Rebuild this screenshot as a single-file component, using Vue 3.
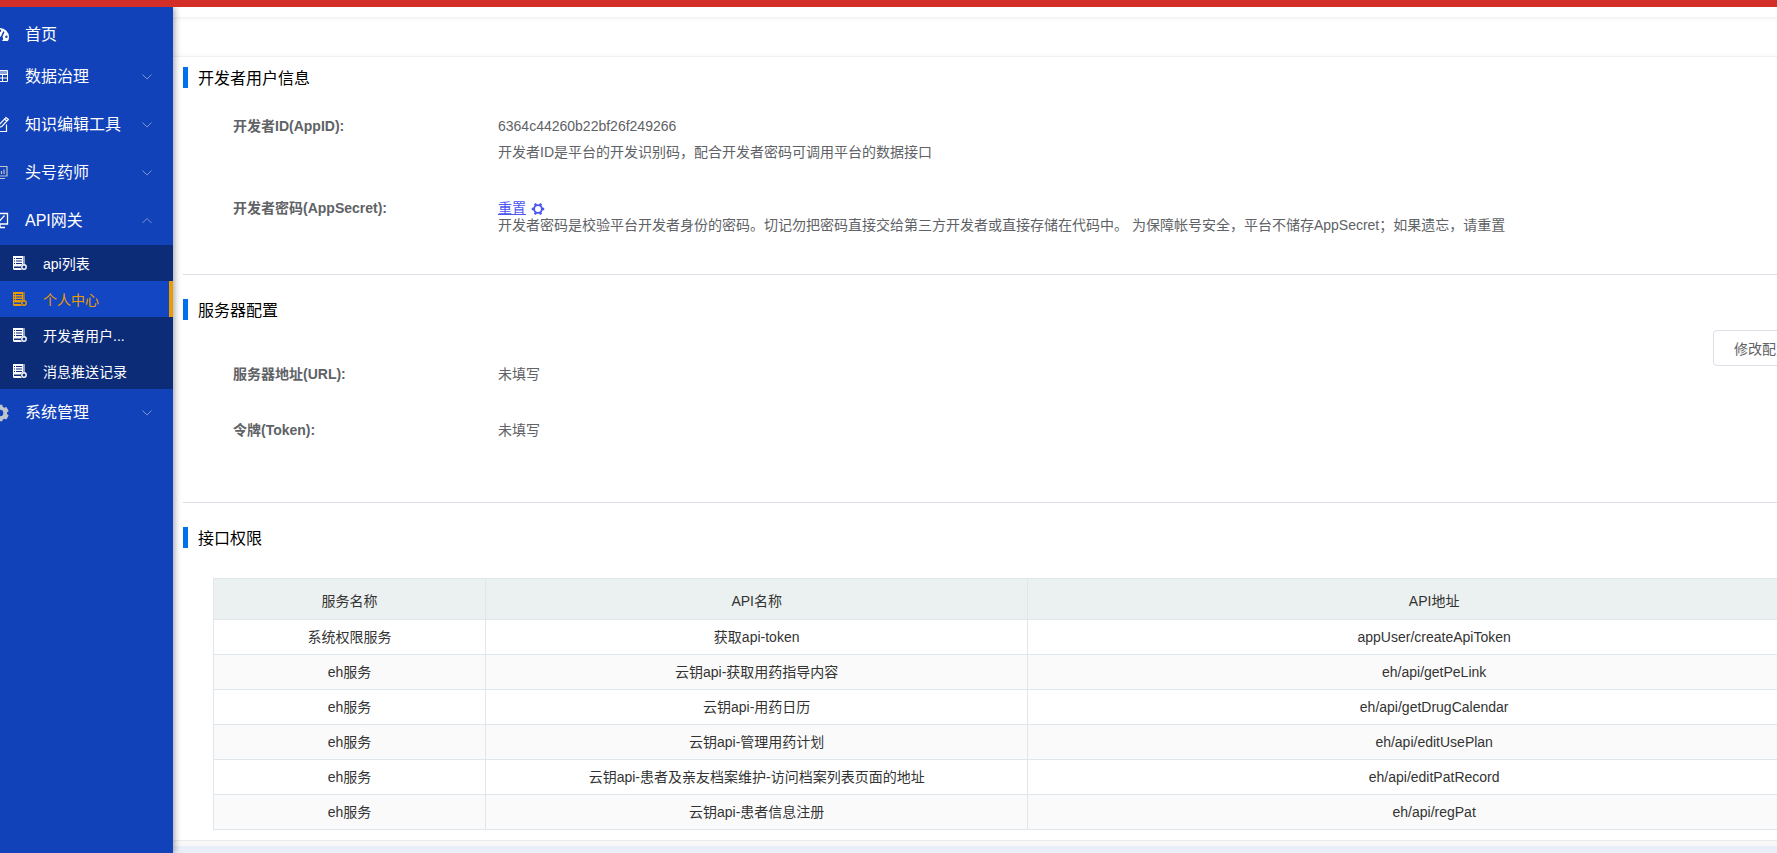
<script setup>
import { ref } from 'vue'

const topItems = [
  { label: '数据治理', icon: 'grid' },
  { label: '知识编辑工具', icon: 'edit' },
  { label: '头号药师', icon: 'board', dim: true }
]
const subItems = ['api列表', '个人中心', '开发者用户...', '消息推送记录']
const active = ref('个人中心')

const rows = [
  ['系统权限服务', '获取api-token', 'appUser/createApiToken'],
  ['eh服务', '云钥api-获取用药指导内容', 'eh/api/getPeLink'],
  ['eh服务', '云钥api-用药日历', 'eh/api/getDrugCalendar'],
  ['eh服务', '云钥api-管理用药计划', 'eh/api/editUsePlan'],
  ['eh服务', '云钥api-患者及亲友档案维护-访问档案列表页面的地址', 'eh/api/editPatRecord'],
  ['eh服务', '云钥api-患者信息注册', 'eh/api/regPat']
]
</script>

<template>
  <div class="page">
    <header class="topbar"></header>
    <div class="shell">
      <nav class="sidebar">
        <a href="#" class="item home">
          <svg class="icon" viewBox="0 0 18 18">
            <path fill="currentColor" fill-rule="evenodd" d="M9 2a9 9 0 0 0-9 9c0 1.800.5 3 1.200 4h15.600c.7-1 1.200-2.200 1.200-4A9 9 0 0 0 9 2zM9 3.500a1.200 1.200 0 1 1 0 2.400 1.200 1.200 0 0 1 0-2.400zM3.800 6a1.200 1.200 0 1 1 0 2.400 1.200 1.200 0 0 1 0-2.400zM2.600 10.500a1.200 1.200 0 1 1 0 2.400 1.200 1.200 0 0 1 0-2.400zM12.200 5.300l1.300.6-2.100 5.200a2.300 2.300 0 1 1-1.500-.6zM15.400 9.500a1.200 1.200 0 1 1 0 2.400 1.200 1.200 0 0 1 0-2.400z" />
          </svg>
          <span>首页</span>
        </a>
        <button v-for="it in topItems" :key="it.label" type="button" class="item">
          <svg class="icon" :class="{ dim: it.dim }" viewBox="0 0 18 18" fill="none" stroke="currentColor">
            <g v-if="it.icon === 'grid'">
              <path d="M1.500 2.500h15v11h-15zM1.500 6.500h15M1.500 10h15M6.500 6v7.500M11.500 6v7.500" />
              <path fill="currentColor" fill-opacity=".5" stroke="none" d="M2 3h14v3H2z" />
            </g>
            <path v-else-if="it.icon === 'edit'" stroke-width="1.200" d="M9 3H1.500v12.500h14V8.500M8.500 8.500l6.500-7 2.300 2-6.500 7-2.800.8zM13.500 3l2.300 2" />
            <path v-else stroke-width="1.200" d="M1.500 2.500h14.500v9.500H1.500zM5 6.500v3.500M8 5v5M10.500 7v3M13 5.500V10M5 14.500h9" />
          </svg>
          <span>{{ it.label }}</span>
          <svg class="arrow" viewBox="0 0 12 12"><path d="M1.500 3.500 6 8l4.500-4.500" /></svg>
        </button>
        <button type="button" class="item" aria-expanded="true">
          <svg class="icon" viewBox="0 0 18 18" fill="none" stroke="currentColor" stroke-width="1.300">
            <path d="M1.500 1.500h15V12h-15zM9 12v3.500M4 15.500h10M6 6.500 8.500 9l5-5.500" />
          </svg>
          <span>API网关</span>
          <svg class="arrow" viewBox="0 0 12 12"><path d="M1.500 8 6 3.500 10.500 8" /></svg>
        </button>
        <div class="submenu">
          <a
            v-for="s in subItems"
            :key="s"
            href="#"
            class="sub"
            :class="{ active: s === active }"
            @click.prevent="active = s"
          >
            <svg class="sub-icon" viewBox="0 0 14 14">
              <path fill="currentColor" opacity=".55" d="M10 0h1.500q.5 0 .5.500V8h-2z" />
              <path fill="currentColor" fill-rule="evenodd" d="M0 0h10v8a3.500 3.500 0 0 0-2.500 2.500H1V12h6.500q.5 1 1.500 2H1.500Q0 14 0 12.500zM3 2v1h6V2zM3 4.500v1h6v-1zM3 7v1h6V7zM1 2v1h1V2zM1 4.500v1h1v-1zM1 7v1h1V7z" />
              <circle cx="11" cy="11" r="2.200" fill="none" stroke="currentColor" stroke-width="1.400" />
            </svg>
            <span>{{ s }}</span>
          </a>
        </div>
        <button type="button" class="item">
          <svg class="icon dim" viewBox="0 0 18 18">
            <path fill="currentColor" fill-rule="evenodd" d="M6.800.7h4.400l.7 2.300 1.200.7 2.300-.6 2.300 3.800L16 8.500V10l1.700 1.600-2.300 3.800-2.300-.6-1.200.7-.7 1.700H6.800l-.7-1.700-1.200-.7-2.300.6L.3 11.600 2 10V8.500L.3 6.900l2.300-3.800 2.300.6L6.100 3zM9 5.700a3.300 3.300 0 1 0 0 6.600 3.300 3.300 0 0 0 0-6.600z" />
          </svg>
          <span>系统管理</span>
          <svg class="arrow" viewBox="0 0 12 12"><path d="M1.500 3.500 6 8l4.500-4.500" /></svg>
        </button>
      </nav>

      <main class="main">
        <div class="tabs"></div>
        <div class="card">
          <section class="section">
            <h2 class="title">开发者用户信息</h2>
            <dl class="info first">
              <dt>开发者ID(AppID):</dt>
              <dd>
                <p>6364c44260b22bf26f249266</p>
                <p>开发者ID是平台的开发识别码，配合开发者密码可调用平台的数据接口</p>
              </dd>
            </dl>
            <dl class="info secret">
              <dt>开发者密码(AppSecret):</dt>
              <dd>
                <a href="#" class="reset">
                  <span>重置</span>
                  <svg viewBox="0 0 14 14">
                    <circle cx="7" cy="7" r="3.900" fill="none" stroke="currentColor" stroke-width="1.900" />
                    <path fill="none" stroke="currentColor" stroke-width="2.400" d="M11 7h2.200M9 10.500l1.100 1.900M5 10.500l-1.100 1.900M3 7H.8M5 3.500 3.900 1.600M9 3.500l1.100-1.900" />
                  </svg>
                </a>
                <p>开发者密码是校验平台开发者身份的密码。切记勿把密码直接交给第三方开发者或直接存储在代码中。 为保障帐号安全，平台不储存AppSecret；如果遗忘，请重置</p>
              </dd>
            </dl>
          </section>

          <section class="section">
            <h2 class="title">服务器配置</h2>
            <div class="config">
              <div class="fields">
                <dl class="info">
                  <dt>服务器地址(URL):</dt>
                  <dd>未填写</dd>
                </dl>
                <dl class="info">
                  <dt>令牌(Token):</dt>
                  <dd>未填写</dd>
                </dl>
              </div>
              <button type="button" class="btn">修改配置</button>
            </div>
          </section>

          <section class="section">
            <h2 class="title">接口权限</h2>
            <div class="table-wrap">
              <table>
                <colgroup><col class="c1" /><col class="c2" /><col /></colgroup>
                <thead>
                  <tr><th>服务名称</th><th>API名称</th><th>API地址</th></tr>
                </thead>
                <tbody>
                  <tr v-for="(r, i) in rows" :key="i">
                    <td v-for="c in r" :key="c">{{ c }}</td>
                  </tr>
                </tbody>
              </table>
            </div>
          </section>
        </div>
      </main>
    </div>
  </div>
</template>

<style>
body {
  margin: 0;
  overflow: hidden;
}
</style>

<style scoped>
.page {
  display: flex;
  flex-direction: column;
  min-height: 100vh;
  overflow: hidden;
  background: #e9eef8;
  font-family: "Liberation Sans", "Noto Sans CJK SC", sans-serif;
  font-size: 14px;
  color: #606266;
}
.topbar {
  position: relative;
  z-index: 2;
  height: 7px;
  background: #d42e28;
}
.shell {
  display: flex;
  flex: 1;
}
.sidebar {
  position: relative;
  z-index: 1;
  flex: none;
  width: 173px;
  box-sizing: border-box;
  padding-top: 10px;
  background: #1242b9;
  box-shadow: 2px 0 6px rgba(0, 21, 41, 0.35);
}
.item {
  display: flex;
  align-items: center;
  width: 100%;
  height: 48px;
  box-sizing: border-box;
  padding: 0 20px 0 0;
  border: 0;
  background: none;
  color: #fff;
  font: inherit;
  font-size: 16px;
  line-height: 24px;
  text-align: left;
  text-decoration: none;
}
.home {
  height: 36px;
}
.icon {
  flex: none;
  width: 18px;
  height: 18px;
  margin: 0 16px 0 -9px;
}
.dim {
  color: #c0c4cc;
}
.arrow {
  width: 12px;
  height: 12px;
  margin-left: auto;
  fill: none;
  stroke: #7f94d2;
}
.submenu {
  background: #0c2c78;
}
.sub {
  display: flex;
  align-items: center;
  gap: 16px;
  height: 36px;
  padding-left: 13px;
  box-sizing: border-box;
  color: #fff;
  text-decoration: none;
}
.sub.active {
  background: #1246c3;
  border-right: 4px solid #eb9b00;
  color: #eb9b00;
}
.sub-icon {
  width: 14px;
  height: 14px;
}
.main {
  flex: none;
  width: calc(100vw - 69px);
}
.tabs {
  height: 40px;
  border-top: 10px solid #fff;
  background: linear-gradient(#f0f0f0, #fafafa 2px, #fff 6px, #fff 34px, #fafafa);
}
.card {
  margin-top: -1px;
  padding: 10px;
  border-top: 1px solid #f0f0f0;
  border-bottom: 1px solid #ebebeb;
  background: #fff;
  box-shadow: 0 5px 0 #f8f8f9;
}
.section + .section {
  margin-top: 40px;
  padding-top: 24px;
  border-top: 1px solid #dcdfe6;
}
.section:last-child {
  margin-top: 59px;
}
.title {
  height: 21px;
  margin: 0;
  padding-left: 10px;
  border-left: 5px solid #0073eb;
  color: #000;
  font-size: 16px;
  font-weight: 400;
  line-height: 23px;
}
.info {
  display: flex;
  margin: 0 0 0 50px;
  line-height: 26px;
}
.info dt {
  flex: none;
  width: 265px;
  font-weight: 700;
}
.info dd,
.info p {
  margin: 0;
}
.first {
  margin-top: 25px;
}
.secret {
  margin-top: 35px;
  line-height: 17px;
}
.reset {
  display: flex;
  align-items: center;
  gap: 5px;
  color: #4d55f0;
}
.reset svg {
  width: 14px;
  height: 14px;
}
.config {
  display: flex;
  justify-content: space-between;
  align-items: flex-start;
}
.fields {
  display: grid;
  gap: 30px;
  padding-top: 41px;
}
.btn {
  margin: 10px 60px 0 0;
  height: 36px;
  padding: 0 20px;
  border: 1px solid #dcdfe6;
  border-radius: 4px;
  background: #fff;
  color: #606266;
  font: inherit;
}
.table-wrap {
  margin: 30px 30px 0;
}
table {
  width: 100%;
  table-layout: fixed;
  border-collapse: separate;
  border-spacing: 0;
  border-top: 1px solid #dfe6ec;
  border-left: 1px solid #dfe6ec;
  color: #333;
}
.c1 {
  width: 16.72%;
}
.c2 {
  width: 33.33%;
}
th,
td {
  padding: 0 10px;
  height: 34px;
  border-right: 1px solid #dfe6ec;
  border-bottom: 1px solid #dfe6ec;
  line-height: 24px;
  font-weight: 400;
  text-align: center;
}
th {
  height: 37px;
  padding-top: 3px;
  background: #ebf1f0;
}
tbody tr:nth-child(even) {
  background: #fafafa;
}
</style>
